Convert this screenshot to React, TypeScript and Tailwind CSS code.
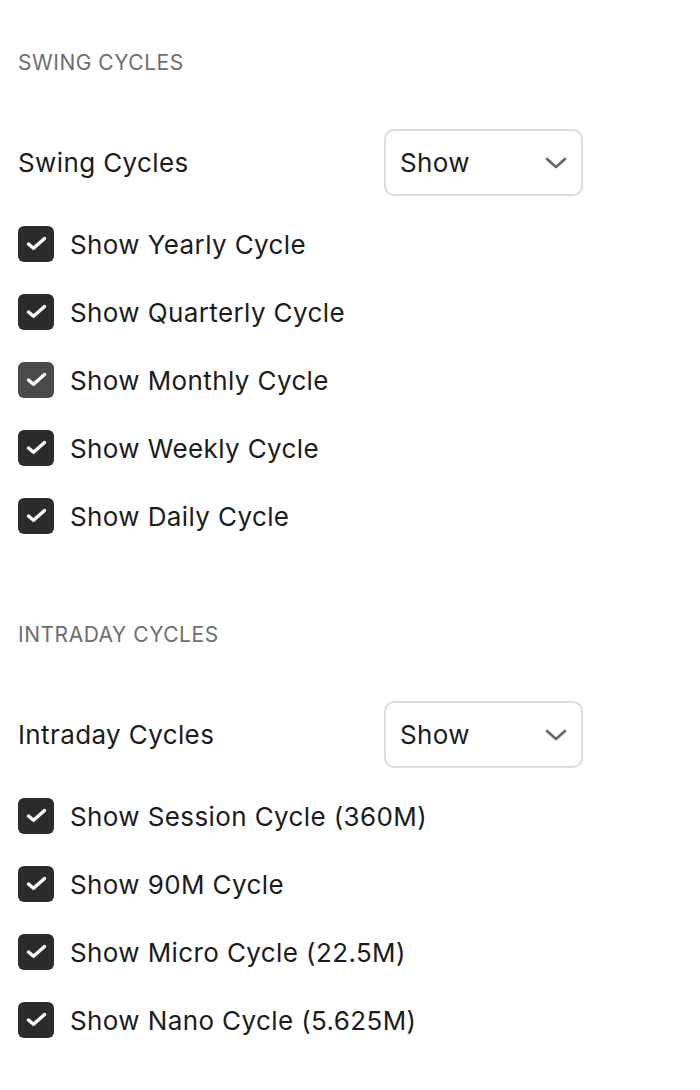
import React from 'react';

const Checkbox: React.FC<{ label: string; hover?: boolean }> = ({ label, hover }) => (
    <label className="flex items-center gap-4 h-9">
        <span className={`h-9 w-9 rounded-[6px] ${hover ? 'bg-[#4a4a4a]' : 'bg-[#2b2b2b]'}`}>
            <svg width="36" height="36" viewBox="0 0 36 36" fill="none">
                <path d="M10.5 18l5 4.3L26.5 12.5" stroke="white" strokeWidth="3.4" strokeLinecap="round" strokeLinejoin="round" />
            </svg>
        </span>
        <span className="text-[26px] tracking-[0.015em] text-[#1c1c1c]">{label}</span>
    </label>
);

const SelectRow: React.FC<{ label: string }> = ({ label }) => (
    <div className="flex items-center justify-between w-[565px]">
        <span className="text-[26px] tracking-[0.015em] text-[#1c1c1c]">{label}</span>
        <div className="flex items-center justify-between h-[67px] w-[199px] rounded-[10px] border-2 border-[#dcdcdc] pl-[14px] pr-[14px]">
            <span className="text-[26px] tracking-[0.015em] text-[#1c1c1c]">Show</span>
            <svg width="22" height="12" viewBox="0 0 22 12" fill="none">
                <path d="M2 2l9 8 9-8" stroke="#666666" strokeWidth="2.6" strokeLinecap="round" strokeLinejoin="round" />
            </svg>
        </div>
    </div>
);

const Section: React.FC<{ title: string; selectLabel: string; items: { label: string; hover?: boolean }[] }> = ({ title, selectLabel, items }) => (
    <section>
        <h2 className="text-[21px] leading-6 tracking-[0.025em] text-[#6e6e6e]">{title}</h2>
        <div className="mt-[54px]">
            <SelectRow label={selectLabel} />
        </div>
        <div className="mt-[30px] flex flex-col gap-8">
            {items.map((item) => (
                <Checkbox key={item.label} label={item.label} hover={item.hover} />
            ))}
        </div>
    </section>
);

export default function App() {
    const swing = [
        { label: 'Show Yearly Cycle' },
        { label: 'Show Quarterly Cycle' },
        { label: 'Show Monthly Cycle', hover: true },
        { label: 'Show Weekly Cycle' },
        { label: 'Show Daily Cycle' },
    ];
    const intraday = [
        { label: 'Show Session Cycle (360M)' },
        { label: 'Show 90M Cycle' },
        { label: 'Show Micro Cycle (22.5M)' },
        { label: 'Show Nano Cycle (5.625M)' },
    ];

    return (
        <div className="min-h-[1090px] w-[700px] bg-white pl-[18px] pt-[51px] font-['Inter',sans-serif]">
            <div className="flex flex-col gap-[89px]">
                <Section title="SWING CYCLES" selectLabel="Swing Cycles" items={swing} />
                <Section title="INTRADAY CYCLES" selectLabel="Intraday Cycles" items={intraday} />
            </div>
        </div>
    );
}
